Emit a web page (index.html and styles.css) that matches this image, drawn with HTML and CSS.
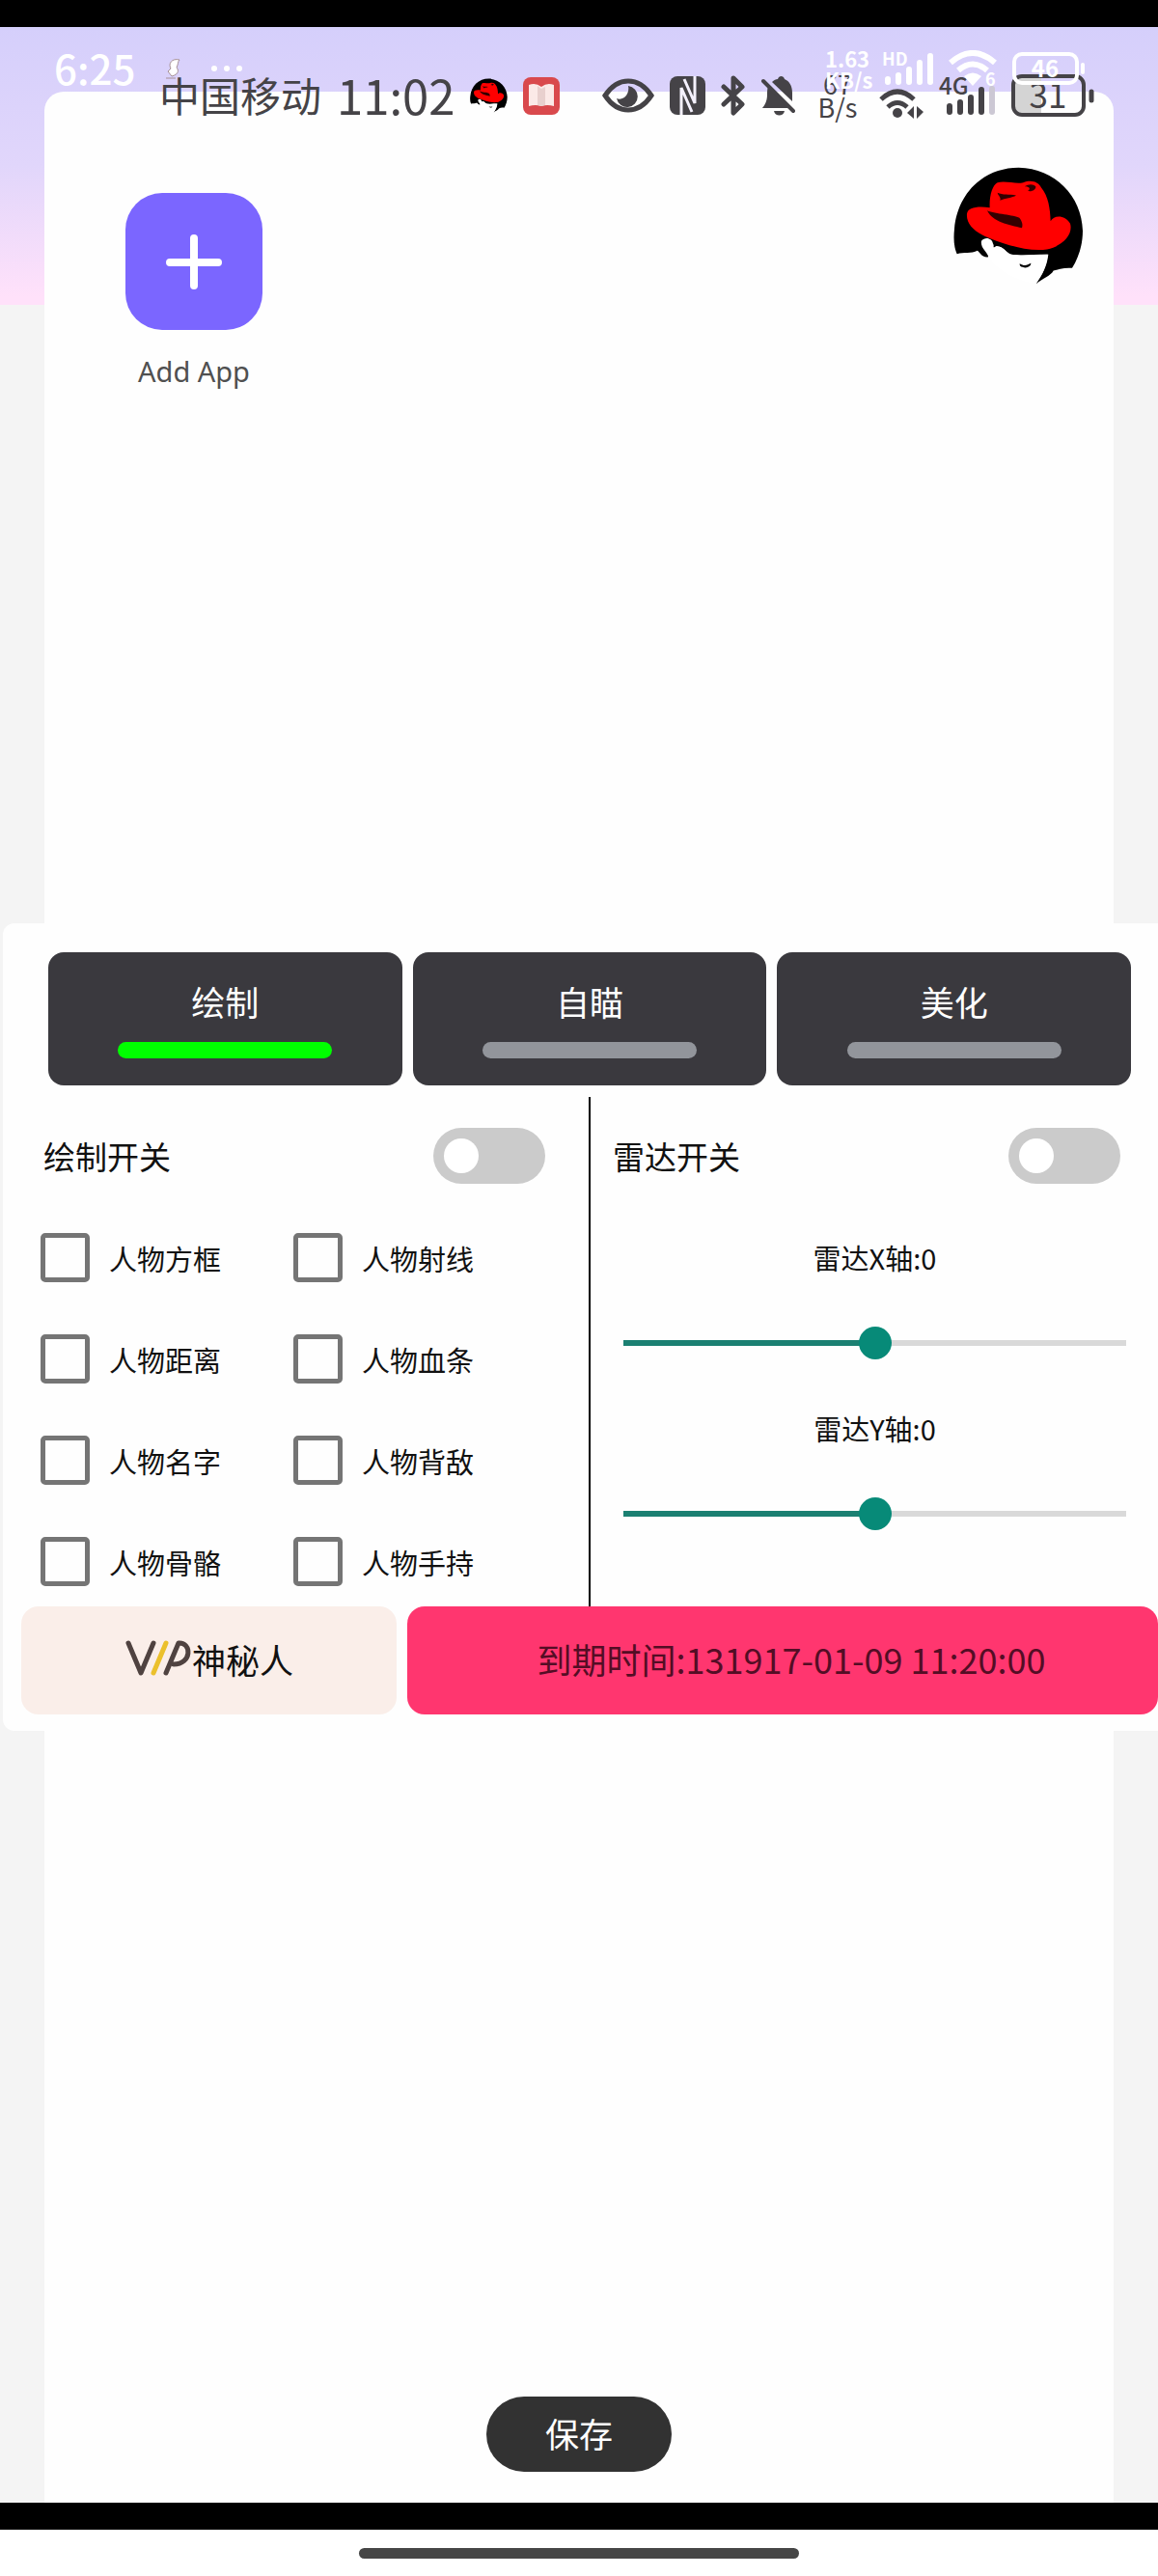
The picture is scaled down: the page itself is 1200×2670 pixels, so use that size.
FILE: index.html
```html
<!DOCTYPE html>
<html lang="zh-CN">
<head>
    <meta charset="UTF-8">
    <meta name="viewport" content="width=device-width, initial-scale=1.0">
    <title>绘制设置</title>
    <link rel="stylesheet" href="styles.css">
</head>
<body>
    <!-- Shared logo, used in the status bar and as the floating ball -->
    <svg class="defs" width="0" height="0" aria-hidden="true">
        <symbol id="hat" viewBox="85 70 405 365">
            <path d="M96 340C86 318 85 290 88 262C98 150 180 72 288 72C400 74 484 160 487 268C487 312 474 352 454 384C430 382 410 388 396 392C388 408 362 416 342 433C362 404 376 378 380 342C330 342 290 346 262 342C248 332 240 318 222 316C214 312 212 326 192 350C176 352 166 336 160 330C140 340 118 334 96 340Z" fill="#000"/>
            <path d="M172 300C184 284 206 292 208 308C214 318 204 322 216 318C240 312 244 336 266 342C300 348 340 342 378 342C374 378 362 404 342 430C300 430 230 400 194 350C190 332 168 322 172 300Z" fill="#fff"/>
            <path d="M291 370C304 378 314 376 326 369C326 380 312 386 300 381C294 380 290 376 291 370Z" fill="#000"/>
            <path d="M127 216C128 196 160 190 198 196C196 160 206 126 222 118C250 112 280 124 302 118C330 108 350 118 358 134C380 160 386 200 387 238C398 218 432 218 448 246C458 280 424 316 376 326C320 334 250 312 200 292C156 276 124 250 127 216Z" fill="#f00"/>
            <path d="M190 205C216 216 274 218 290 228C298 238 302 250 298 259C258 250 206 240 190 205ZM222 150C238 158 258 154 280 158C268 166 246 166 230 174C234 164 224 160 222 150ZM306 130C318 122 334 122 341 130C342 140 328 148 316 144C328 136 318 130 306 130Z" fill="#300"/>
        </symbol>
    </svg>

    <div class="edge"></div>

    <main class="screen">
        <section class="card">
            <button class="app" type="button">
                <span class="app-icon">
                    <svg width="58" height="58" viewBox="0 0 58 58" stroke="#fff" stroke-width="8" stroke-linecap="round">
                        <path d="M29 5v49M4 30h50"/>
                    </svg>
                </span>
                <span class="app-name">Add App</span>
            </button>
            <button class="save" type="button">保存</button>
        </section>

        <svg class="ball" width="135" height="122"><use href="#hat"/></svg>

        <!-- Status bar of the host phone -->
        <div class="status status-dark">
            <span class="carrier">中国移动</span>
            <span class="clock">11:02</span>
            <svg width="39" height="38"><use href="#hat"/></svg>
            <svg width="38" height="39" viewBox="0 0 38 39">
                <rect width="38" height="39" rx="8" fill="#d9494d"/>
                <path d="M6 8q7-3 13 2q6-5 13-2v22q-7-2-13 0q-6-2-13 0z" fill="#fbe9e7"/>
                <path d="M15 9l4 3 4-2v19l-4 1-4-1z" fill="#e8d0ce"/>
            </svg>
            <div class="status-right">
                <svg width="54" height="36" viewBox="0 0 54 36">
                    <path d="M3 18Q13 3 27 3T51 18Q41 33 27 33T3 18Z" fill="none" stroke="#454347" stroke-width="5"/>
                    <path d="M27 8a11 11 0 1 1-12 13c7 3 14-5 12-13z" fill="#454347"/>
                </svg>
                <svg width="37" height="40" viewBox="0 0 37 40">
                    <rect width="37" height="40" rx="8" fill="#454347"/>
                    <path d="M12 40V12L23 37M15 3L26 28V0" fill="none" stroke="#f4f1fd" stroke-width="3"/>
                </svg>
                <svg width="26" height="42" viewBox="0 0 26 42" fill="none" stroke="#454347" stroke-width="5" stroke-linejoin="round" stroke-linecap="round">
                    <path d="M3 12l19 18-9 9V3l9 9L3 30"/>
                </svg>
                <svg width="36" height="41" viewBox="0 0 36 41">
                    <path d="M7 11L29 33H1c4-5 5-9 5-14 0-3 0-6 1-8zM11 6c2-2 4-3 6-3 1-4 6-4 7 0 5 2 8 7 8 14v9zM13 36h11c-1 6-10 6-11 0z" fill="#454347"/>
                    <path d="M2 5l31 31" stroke="#454347" stroke-width="4" stroke-linecap="round"/>
                </svg>
                <span class="speed">67<br>B/s</span>
                <svg class="low" width="46" height="31" viewBox="0 0 46 31">
                    <path d="M2 11Q19-5 36 11M9 19q10-9 20 0" fill="none" stroke="#454347" stroke-width="5"/>
                    <circle cx="19" cy="25" r="5" fill="#454347"/>
                    <path d="M36 18v13l-7-6zM39 18v13l7-7z" fill="#454347"/>
                </svg>
                <svg width="59" height="41" viewBox="0 0 59 41">
                    <text x="0" y="19" class="net">4G</text>
                    <path d="M11 31v6M22 27v10M33 22v15M44 14v23" stroke="#454347" stroke-width="6" stroke-linecap="round"/>
                    <path d="M55 13v24" stroke="#ccc8d4" stroke-width="6" stroke-linecap="round"/>
                </svg>
                <svg width="86" height="44" viewBox="0 0 86 44">
                    <path d="M10 3h21v38H10q-7 0-7-8V11q0-8 7-8z" fill="#d4d4d4"/>
                    <rect x="2" y="2" width="73" height="40" rx="9" fill="none" stroke="#454347" stroke-width="4"/>
                    <path d="M83 18v9" stroke="#454347" stroke-width="5" stroke-linecap="round"/>
                    <text x="38" y="35" text-anchor="middle" class="charge">31</text>
                </svg>
            </div>
        </div>

        <!-- Status bar of the virtual space -->
        <div class="status status-light">
            <span class="time">6:25</span>
            <svg width="92" height="26" viewBox="0 0 92 26">
                <path d="M18 4c-8-2-12 4-9 9l-3 3 4 5c8-2 7-7 5-9 2-4 1-6 3-8z" fill="#fff" stroke="#a58f95" stroke-width="1"/>
                <path d="M4 23h10" stroke="#a58f95"/>
                <circle cx="54" cy="13" r="3" fill="#fff"/>
                <circle cx="67" cy="13" r="3" fill="#fff"/>
                <circle cx="80" cy="13" r="3" fill="#fff"/>
            </svg>
            <div class="status-right">
                <div class="traffic">
                    <span class="rate">1.63<br>KB/s</span>
                    <svg width="53" height="36" viewBox="0 0 53 36">
                        <text x="0" y="15" class="hd">HD</text>
                        <path d="M6 29v3M17 25v7M28 19v13M39 12v20M50 5v27" stroke="#fff" stroke-width="6" stroke-linecap="round"/>
                    </svg>
                </div>
                <svg width="50" height="38" viewBox="0 0 50 38">
                    <path d="M2 13Q25-7 48 13M10 21q15-13 30 0" fill="none" stroke="#fff" stroke-width="6"/>
                    <path d="M16 27q9-7 18 0l-9 10z" fill="#fff"/>
                    <text x="38" y="37" class="hd">6</text>
                </svg>
                <svg width="75" height="34" viewBox="0 0 75 34">
                    <rect x="2" y="2" width="65" height="30" rx="8" fill="none" stroke="#fff" stroke-width="4"/>
                    <path d="M73 13v8" stroke="#fff" stroke-width="4" stroke-linecap="round"/>
                    <text x="34" y="26" text-anchor="middle" class="percent">46</text>
                </svg>
            </div>
        </div>

        <!-- Floating menu -->
        <section class="panel">
            <nav class="tabs">
                <button class="tab active" type="button">绘制</button>
                <button class="tab" type="button">自瞄</button>
                <button class="tab" type="button">美化</button>
            </nav>

            <div class="columns">
                <div class="column">
                    <label class="switch-row switch-draw">绘制开关<input class="switch" type="checkbox"></label>
                    <div class="checks">
                        <label class="check"><input type="checkbox">人物方框</label>
                        <label class="check"><input type="checkbox">人物射线</label>
                        <label class="check"><input type="checkbox">人物距离</label>
                        <label class="check"><input type="checkbox">人物血条</label>
                        <label class="check"><input type="checkbox">人物名字</label>
                        <label class="check"><input type="checkbox">人物背敌</label>
                        <label class="check"><input type="checkbox">人物骨骼</label>
                        <label class="check"><input type="checkbox">人物手持</label>
                    </div>
                </div>
                <div class="column column-radar">
                    <label class="switch-row switch-radar">雷达开关<input class="switch" type="checkbox"></label>
                    <div class="sliders">
                        <label for="radar-x">雷达X轴:0</label>
                        <input id="radar-x" type="range" min="-100" max="100" value="0">
                        <label for="radar-y">雷达Y轴:0</label>
                        <input id="radar-y" type="range" min="-100" max="100" value="0">
                    </div>
                </div>
            </div>

            <footer class="account">
                <div class="vip">
                    <svg width="70" height="42" viewBox="0 0 70 42" fill="none" stroke="#4f4240" stroke-width="5" stroke-linecap="round" stroke-linejoin="round">
                        <path d="M4 5l13 31L30 5"/>
                        <path d="M43 5L30 36" stroke="#ebc02c"/>
                        <path d="M43 36L56 5c14-1 14 22-5 22"/>
                    </svg>
                    神秘人
                </div>
                <div class="expiry">到期时间:131917-01-09 11:20:00</div>
            </footer>
        </section>
    </main>

    <div class="edge"></div>
    <div class="gesture"><span class="gesture-bar"></span></div>
</body>
</html>
```
FILE: styles.css
```css
* {
    box-sizing: border-box;
}
body {
    margin: 0;
    min-height: 100vh;
    display: flex;
    flex-direction: column;
    background: #fff;
    font-family: "Noto Sans CJK SC", sans-serif;
    color: #111;
}
svg {
    display: block;
    flex-shrink: 0;
}
button {
    border: 0;
    padding: 0;
    font-family: inherit;
}
.defs {
    position: absolute;
}
.edge {
    height: 28px;
    background: #000;
}

/* App screen */
.screen {
    position: relative;
    flex: 1;
    display: flex;
    padding: 67px 46px 0;
    background: linear-gradient(#d5cffb, #e1d6fb 144px, #ffe1fa 280px, #ffe1fa 288px, #f4f4f4 288px);
}
.card {
    flex: 1;
    display: flex;
    flex-direction: column;
    align-items: flex-start;
    justify-content: space-between;
    padding: 105px 84px 32px;
    background: #fefefe;
    border-radius: 20px 20px 0 0;
}
.app {
    display: flex;
    flex-direction: column;
    align-items: center;
    gap: 20px;
    background: none;
}
.app-icon {
    display: flex;
    align-items: center;
    justify-content: center;
    width: 142px;
    height: 142px;
    border-radius: 38px;
    background: #7b66ff;
}
.app-name {
    font-family: "Noto Sans", sans-serif;
    font-size: 29px;
    line-height: 46px;
    color: #505050;
}
.save {
    align-self: center;
    width: 192px;
    height: 78px;
    padding-bottom: 4px;
    border-radius: 39px;
    background: #323232;
    color: #fff;
    font-size: 35px;
}
.ball {
    position: absolute;
    top: 145px;
    right: 77px;
}

/* Status bars, one drawn over the other */
.status {
    position: absolute;
    left: 0;
    right: 0;
    display: flex;
    align-items: center;
    gap: 16px;
    height: 48px;
}
.status-right {
    display: flex;
    align-items: center;
    gap: 16px;
    margin-left: auto;
}
.status-dark {
    top: 47px;
    padding: 0 66px 0 165px;
    color: #454347;
}
.status-light {
    top: 19px;
    padding: 0 76px 0 56px;
    gap: 28px;
    color: #fff;
}
.carrier,
.clock,
.time {
    padding-bottom: 4px;
}
.carrier {
    font-size: 42px;
}
.clock {
    font-size: 49px;
}
.time {
    font-size: 42px;
    font-weight: 500;
}
.speed {
    width: 54px;
    text-align: center;
    font-size: 27px;
    line-height: 24px;
}
.low {
    align-self: flex-end;
}
.traffic {
    display: flex;
    align-items: center;
    gap: 8px;
}
.rate {
    width: 51px;
    font-size: 22px;
    font-weight: 700;
    line-height: 22px;
    white-space: nowrap;
}
.net {
    font-size: 24px;
    font-weight: 500;
    fill: #454347;
}
.charge {
    font-size: 35px;
    fill: #454347;
}
.hd {
    font-size: 18px;
    font-weight: 700;
    fill: #fff;
}
.percent {
    font-size: 24px;
    font-weight: 700;
    fill: #fff;
}

/* Floating menu */
.panel {
    position: absolute;
    top: 929px;
    left: 3px;
    right: 0;
    padding: 30px 0 17px;
    background: #fefefe;
    border-radius: 12px 0 0 12px;
}
.tabs {
    display: flex;
    gap: 11px;
    padding: 0 28px 0 47px;
}
.tab {
    flex: 1;
    display: flex;
    flex-direction: column;
    align-items: center;
    gap: 16px;
    height: 138px;
    padding-top: 25px;
    border-radius: 16px;
    background: #3a393e;
    color: #fff;
    font-size: 35px;
    line-height: 52px;
}
.tab::after {
    content: "";
    width: 222px;
    height: 17px;
    border-radius: 9px;
    background: #92959b;
}
.tab.active::after {
    background: #0f0;
}
.columns {
    display: grid;
    grid-template-columns: 607fr 590fr;
    margin-top: 12px;
}
.column-radar {
    border-left: 2px solid #000;
}
.switch-row {
    display: flex;
    align-items: center;
    justify-content: space-between;
    height: 122px;
    font-size: 33px;
}
.switch-draw {
    padding: 0 45px 0 42px;
}
.switch-radar {
    padding: 0 39px 0 23px;
}
.switch {
    appearance: none;
    margin: 0;
    padding: 11px;
    width: 116px;
    height: 58px;
    border-radius: 29px;
    background: #cbcbcb;
}
.switch::before {
    content: "";
    display: block;
    width: 36px;
    height: 36px;
    border-radius: 50%;
    background: #fff;
}
.switch:checked::before {
    margin-left: auto;
}
.checks {
    display: grid;
    grid-template-columns: 262px 1fr;
    row-gap: 54px;
    padding: 19px 0 21px 39px;
}
.check {
    display: flex;
    align-items: center;
    gap: 20px;
    height: 51px;
    font-size: 29px;
}
.check input {
    appearance: none;
    margin: 0;
    width: 51px;
    height: 51px;
    border: 5px solid #757575;
    border-radius: 5px;
}
.check input:checked {
    background: #757575;
}
.sliders {
    display: flex;
    flex-direction: column;
    gap: 46px;
    padding: 19px 33px 0 34px;
    font-size: 29px;
    line-height: 51px;
    text-align: center;
}
.sliders input {
    appearance: none;
    margin: 0;
    width: 100%;
    height: 34px;
    background: linear-gradient(90deg, #1b8072 50%, #d9d9d9 50%) center / 100% 6px no-repeat;
}
.sliders input::-webkit-slider-thumb {
    appearance: none;
    width: 34px;
    height: 34px;
    border-radius: 50%;
    background: #078a78;
}
.account {
    display: grid;
    grid-template-columns: 1fr 2fr;
    gap: 11px;
    margin-left: 19px;
    font-size: 35px;
}
.vip,
.expiry {
    display: flex;
    align-items: center;
    justify-content: center;
    height: 112px;
    padding-bottom: 4px;
    border-radius: 18px;
}
.vip {
    background: #faeee9;
}
.expiry {
    padding-left: 18px;
    background: #ff366f;
    color: #540d25;
    font-size: 36px;
}

/* Gesture navigation */
.gesture {
    display: flex;
    align-items: center;
    justify-content: center;
    height: 48px;
}
.gesture-bar {
    width: 38%;
    height: 11px;
    border-radius: 6px;
    background: #464646;
}
```
